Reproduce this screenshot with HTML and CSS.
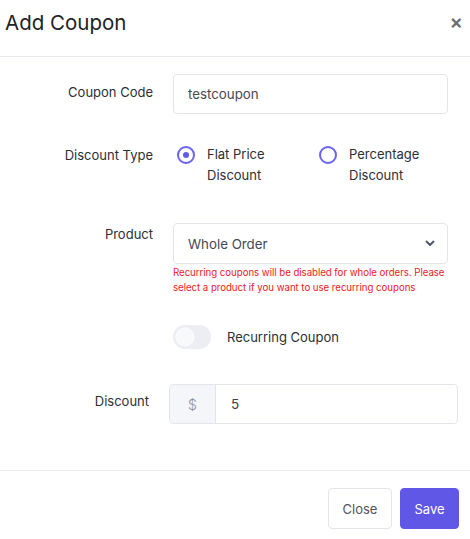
FILE: index.html
```html
<!DOCTYPE html>
<html>
<head>
<meta charset="utf-8">
<link rel="stylesheet" href="styles.css">
</head>
<body>
<div class="modal">
  <div class="modal-header">
    <h1 class="modal-title">Add Coupon</h1>
    <span class="close-x">&times;</span>
  </div>
  <div class="modal-body">
    <div class="row row-code">
      <label class="label">Coupon Code</label>
      <div class="field">
        <div class="input">testcoupon</div>
      </div>
    </div>
    <div class="row row-type">
      <label class="label">Discount Type</label>
      <div class="field radios">
        <div class="radio-opt">
          <span class="radio checked"></span>
          <span class="radio-text">Flat Price<br>Discount</span>
        </div>
        <div class="radio-opt">
          <span class="radio"></span>
          <span class="radio-text">Percentage<br>Discount</span>
        </div>
      </div>
    </div>
    <div class="row row-product">
      <label class="label">Product</label>
      <div class="field">
        <div class="input select">
          <span>Whole Order</span>
          <svg class="chev" width="10" height="7" viewBox="0 0 10 7"><path d="M1.5 1.5 L5 5 L8.5 1.5" fill="none" stroke="#4b5563" stroke-width="1.8" stroke-linecap="round" stroke-linejoin="round"/></svg>
        </div>
        <p class="error">Recurring coupons will be disabled for whole orders. Please select a product if you want to use recurring coupons</p>
      </div>
    </div>
    <div class="row row-toggle">
      <div class="label"></div>
      <div class="field toggle-field">
        <span class="toggle"><span class="knob"></span></span>
        <span class="toggle-text">Recurring Coupon</span>
      </div>
    </div>
    <div class="row row-discount">
      <label class="label">Discount</label>
      <div class="field">
        <div class="input-group">
          <span class="prefix">$</span>
          <span class="value">5</span>
        </div>
      </div>
    </div>
  </div>
  <div class="modal-footer">
    <button class="btn btn-close">Close</button>
    <button class="btn btn-save">Save</button>
  </div>
</div>
</body>
</html>
```
FILE: styles.css
```css
* { box-sizing: border-box; }
html, body { margin: 0; padding: 0; background: #fff; }
body {
  font-family: Inter, "Noto Sans", sans-serif;
  color: #2b2f36;
  width: 470px;
  height: 539px;
  overflow: hidden;
}
.modal { width: 470px; }
.modal-header {
  height: 57px;
  border-bottom: 1px solid #e8e9ee;
  display: flex;
  align-items: flex-start;
  justify-content: space-between;
  padding: 0 7px 0 5px;
}
.modal-title {
  margin: 0;
  padding-top: 9px;
  font-size: 20.5px;
  font-weight: 400;
  line-height: 28px;
  color: #1f2226;
  letter-spacing: 0;
}
.close-x {
  font-size: 20px;
  line-height: 20px;
  margin-top: 12px;
  color: #6b6f76;
  font-weight: 600;
}
.row {
  display: grid;
  grid-template-columns: 153px 275px;
  column-gap: 20px;
  align-items: start;
}
.label {
  text-align: right;
  font-size: 13px;
  line-height: 20px;
  color: #2b2f36;
}
.row-code { margin-top: 17px; }
.row-code .label { padding-top: 8px; }
.input {
  height: 40px;
  border: 1px solid #e3e5eb;
  border-radius: 4px;
  padding: 0 14px;
  display: flex;
  align-items: center;
  font-size: 13.3px;
  color: #454a53;
}
.row-type { margin-top: 30px; }
.row-type .label { padding-top: 1px; }
.radios { display: flex; }
.radio-opt { display: flex; align-items: flex-start; width: 142px; flex: none; }
.radio {
  width: 18px;
  height: 18px;
  border: 2px solid #6a63f0;
  border-radius: 50%;
  margin: 2px 0 0 4px;
  position: relative;
  flex: none;
}
.radio.checked::after {
  content: "";
  position: absolute;
  width: 6px;
  height: 6px;
  border-radius: 50%;
  background: #6058e6;
  left: 4px;
  top: 4px;
}
.radio-text {
  margin-left: 12px;
  font-size: 13px;
  line-height: 21px;
  color: #2b2f36;
}
.row-product { margin-top: 37px; }
.row-product .label { padding-top: 1px; }
.select { height: 41px; justify-content: space-between; padding-right: 12px; }
.error {
  margin: 1px 0 0;
  font-size: 9.7px;
  letter-spacing: -0.05px;
  line-height: 15px;
  color: #f01a1a;
}
.row-toggle { margin-top: 30px; }
.toggle-field { display: flex; align-items: center; }
.toggle {
  width: 38px;
  height: 24px;
  border-radius: 12px;
  background: #eceef3;
  position: relative;
  flex: none;
}
.knob {
  position: absolute;
  left: 2px;
  top: 2px;
  width: 20px;
  height: 20px;
  border-radius: 50%;
  background: #f8f9fb;
  box-shadow: 0 0 1px rgba(0,0,0,0.08);
}
.toggle-text {
  margin-left: 16px;
  font-size: 13px;
  color: #2b2f36;
}
.row-discount {
  margin-top: 35px;
  grid-template-columns: 149px 289px;
}
.row-discount .label { padding-top: 7px; }
.input-group {
  height: 40px;
  border: 1px solid #e3e5eb;
  border-radius: 4px;
  display: flex;
  overflow: hidden;
}
.prefix {
  width: 46px;
  background: #f5f6fa;
  border-right: 1px solid #e3e5eb;
  display: flex;
  align-items: center;
  justify-content: center;
  color: #8a8f99;
  font-size: 14px;
  font-weight: 300;
}
.value {
  display: flex;
  align-items: center;
  padding-left: 15px;
  font-size: 13.5px;
  color: #3a3f47;
}
.modal-footer {
  margin-top: 46px;
  border-top: 1px solid #e8e9ee;
  padding: 17px 11px 0 0;
  display: flex;
  justify-content: flex-end;
  gap: 8px;
}
.btn {
  height: 41px;
  border-radius: 4px;
  font-family: Inter, "Noto Sans", sans-serif;
  font-size: 13px;
  padding: 0;
}
.btn-close {
  width: 64px;
  background: #fff;
  border: 1px solid #e3e5eb;
  color: #4f5560;
}
.btn-save {
  width: 59px;
  background: #6157e7;
  border: 1px solid #6157e7;
  color: #fff;
}
```
